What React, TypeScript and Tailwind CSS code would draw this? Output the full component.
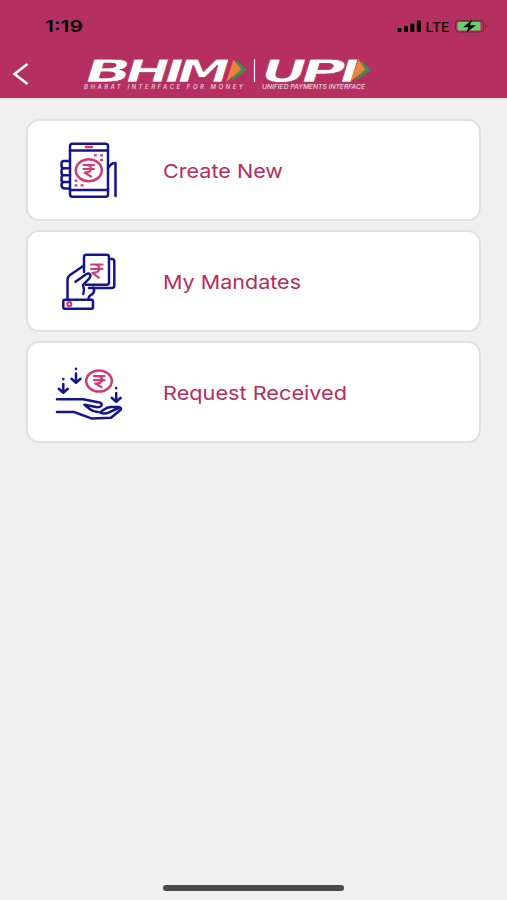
import type { ReactNode } from "react";

const NAVY = "#15158c";
const PINK = "#d23a78";

type IconProps = {
  label: string;
  viewBox: string;
  className: string;
  children: ReactNode;
};

function LineIcon({ label, viewBox, className, children }: IconProps) {
  return (
    <svg
      aria-label={label}
      viewBox={viewBox}
      className={className}
      fill="none"
      stroke={NAVY}
      strokeWidth={2.5}
      strokeLinecap="round"
      strokeLinejoin="round"
    >
      {children}
    </svg>
  );
}

function PhoneIcon() {
  return (
    <LineIcon label="Phone" viewBox="50 130 80 80" className="size-20">
      <rect x="70" y="143.7" width="38" height="53" rx="2.5" />
      <path d="M70 150.5H108M70 190H108" />
      <path d="M70 161H64Q61.5 161 61.5 163.5V166Q61.5 168 64 168.3H70M64 168.3Q61.5 168.3 61.5 171V173Q61.5 175.3 64 175.3H70M64 175.3Q61.5 175.3 61.5 178V180Q61.5 182 64 182H70M64 182Q61.5 182 61.5 185Q61.5 188.5 65 188.5H70" />
      <path d="M108 168L111 164.5Q112.5 163 115.5 163V196" />
      <g stroke={PINK}>
        <path d="M86 147H92" />
        <ellipse cx="88.8" cy="170.3" rx="13" ry="11" />
        <path
          d="M83.5 165H94M83.5 169H94M83.5 165H86.5Q91 165 91 169Q91 172.5 84.5 172.5L91 176.5"
          strokeWidth="2.1"
        />
        <path
          d="M95.2 155.3H95.7M101.3 155.3H101.8M101.3 160H101.8M75.8 180.7H76.3M75.8 185.3H76.3M81.8 185.3H82.3"
          strokeWidth="2.3"
          strokeLinecap="square"
        />
      </g>
    </LineIcon>
  );
}

function HandCardIcon() {
  return (
    <LineIcon label="Hand holding card" viewBox="50 240 80 80" className="size-20">
      <rect x="63.3" y="298.7" width="29.7" height="9" rx="1.5" />
      <path d="M67.5 298V279Q67.5 276 70 274L84 264.5" />
      <path d="M84 271V256Q84 253.8 86.5 253.8H106.5Q109 253.8 109 256V281.5Q109 283.7 106.5 283.7H86" />
      <path d="M109 258H112Q114.3 258 114.3 260.5V284.5Q114.3 287 111.8 287H89" />
      <path d="M75.5 280.8L86.5 273Q88.5 271.8 90 273.3Q91.2 275 89.3 277.3L83 284Q84.8 288.5 83.3 293" />
      <path d="M93.3 286.5Q95.5 291 91.5 293.7Q88.5 295 88.5 298" />
      <g stroke={PINK} strokeWidth="2.2">
        <path d="M91 263.5H102.5M91 268H102.5M91 263.5H94Q99.3 263.5 99.3 267.8Q99.3 271.8 92.5 271.8L98.8 276.7" />
        <circle cx="69.3" cy="303.2" r="2" />
      </g>
    </LineIcon>
  );
}

function ReceiveIcon() {
  return (
    <LineIcon label="Receive money" viewBox="45 350 90 80" className="h-20 w-[90px]">
      <path d="M63.3 377V377.2M63.3 382V390.5M58.8 386.8L63.3 390.8L67.8 386.8" />
      <path d="M76 366.8V367M76 371.5V380.5M71.5 376.8L76 380.8L80.5 376.8" />
      <path d="M116.2 386V386.2M116.2 391V399.3M111.7 395.8L116.2 399.8L120.7 395.8" />
      <path d="M57 397.2H83L99.5 400.4Q102.5 401.2 101.5 403.5Q100.3 405.6 96 405L84.5 402.7L90 407.2Q93 409.8 98 410" />
      <path d="M57 410H74L92 416.6L111 415.8L121 407.5Q121.5 405 118 405H111Q107 405.2 104 407.5L100 410.4Q104 412.4 108.5 410.6L118.5 406" />
      <g stroke={PINK}>
        <ellipse cx="99" cy="379" rx="12.8" ry="10.5" />
        <path
          d="M94 374.2H104.5M94 378.2H104.5M94 374.2H97Q102 374.2 102 378Q102 381.5 95.3 381.5L101.5 385"
          strokeWidth="2.2"
        />
      </g>
    </LineIcon>
  );
}

function Logo() {
  return (
    <svg
      aria-label="BHIM UPI"
      viewBox="80 54 296 40"
      className="h-10 w-[296px] overflow-visible"
      fill="white"
    >
      <g
        fontSize="31.5"
        fontWeight="700"
        fontFamily="'DejaVu Sans', sans-serif"
        stroke="#b53060"
        strokeWidth=".7"
      >
        <text transform="translate(81 82) skewX(-17) scale(1.7 1)">
          <tspan x="0" textLength="28" lengthAdjust="spacingAndGlyphs">B</tspan>
          <tspan x="24.2">H</tspan>
          <tspan x="47">I</tspan>
          <tspan x="54.5">M</tspan>
        </text>
        <text transform="translate(257.5 82) skewX(-17) scale(1.7 1)">
          <tspan x="0" textLength="27.5" lengthAdjust="spacingAndGlyphs">U</tspan>
          <tspan x="23.3" textLength="27" lengthAdjust="spacingAndGlyphs">P</tspan>
          <tspan x="46.3">I</tspan>
        </text>
      </g>
      <path d="M254.5 59V82" stroke="white" strokeWidth="1.2" />
      <path d="M236.5 60L247 70L231 81.5Z" fill="#3f8a4d" />
      <path d="M233.5 59.5L241.5 69.5L226 82Z" fill="#ee8140" />
      <path d="M361.5 60L370.8 70L354.5 81.5Z" fill="#3f8a4d" />
      <path d="M358.5 59.5L365.5 69.5L350 82Z" fill="#ee8140" />
      <g fontFamily="Inter, sans-serif" fontWeight="500" fontStyle="italic" fillOpacity=".8">
        <text x="84" y="89" textLength="159" fontSize="6">
          BHARAT INTERFACE FOR MONEY
        </text>
        <text x="262" y="89" textLength="103" lengthAdjust="spacingAndGlyphs" fontSize="6.4">
          UNIFIED PAYMENTS INTERFACE
        </text>
      </g>
    </svg>
  );
}

function StatusIcons() {
  return (
    <svg viewBox="395 16 96 20" className="h-5 w-24" fontFamily="Inter, sans-serif">
      <rect x="397.5" y="28" width="4" height="4" rx="1" />
      <rect x="404" y="26" width="4" height="6" rx="1" />
      <rect x="410.3" y="23.5" width="4" height="8.5" rx="1" />
      <rect x="416.8" y="20.5" width="4" height="11.5" rx="1" />
      <text x="425.5" y="31.5" fontSize="13" fontWeight="500" textLength="24" lengthAdjust="spacingAndGlyphs">
        LTE
      </text>
      <rect x="455.5" y="20.5" width="28" height="11.5" rx="3" fill="none" stroke="#6b2543" />
      <rect x="457.5" y="22" width="23" height="8.5" rx="1.5" fill="#68cf69" />
      <path d="M485.5 24V28.5L487.5 26.3Z" fill="#6b2543" />
      <path d="M472 20L463 27.2H468.5L466.5 32.5L476 25.3H470Z" />
    </svg>
  );
}

const items = [
  { label: "Create New", icon: <PhoneIcon />, width: "w-[120px]", length: 120 },
  { label: "My Mandates", icon: <HandCardIcon />, width: "w-[138px]", length: 138 },
  { label: "Request Received", icon: <ReceiveIcon />, width: "w-[184px]", length: 184 },
];

export default function App() {
  return (
    <div className="flex h-[900px] w-[507px] flex-col bg-[#f0f0f0] font-['Inter',sans-serif]">
      <header className="h-[98px] bg-[#b53060]">
        <div className="flex h-[54px] items-start justify-between pt-4 pr-4 pl-[45px]">
          <svg viewBox="0 0 40 20" className="h-5 w-10" aria-label="Time">
            <text
              x="0"
              y="16"
              fontSize="16.5"
              fontWeight="600"
              textLength="38"
              lengthAdjust="spacingAndGlyphs"
            >
              1:19
            </text>
          </svg>
          <StatusIcons />
        </div>
        <div className="flex items-center">
          <button aria-label="Back" className="flex w-20 pl-3">
            <svg viewBox="0 0 18 24" className="h-6 w-[18px]" fill="none" stroke="white" strokeWidth="2.5">
              <path d="M15.5 2L2.5 12L15.5 22" />
            </svg>
          </button>
          <Logo />
        </div>
      </header>

      <main className="flex flex-1 flex-col gap-[9px] px-[26px] pt-[21px]">
        {items.map((item) => (
          <button
            key={item.label}
            className="flex h-[102px] items-center rounded-[13px] border-2 border-[#e1e1e1] bg-white"
          >
            <span className="flex w-[135px] justify-center pr-[11px]">{item.icon}</span>
            <svg viewBox={`0 0 ${item.length} 28`} className={`h-7 overflow-visible ${item.width}`}>
              <text
                x="0"
                y="21.5"
                fontSize="19"
                fill="#b52d5d"
                textLength={item.length}
                lengthAdjust="spacingAndGlyphs"
              >
                {item.label}
              </text>
            </svg>
          </button>
        ))}
      </main>

      <footer className="flex justify-center pb-[9px]">
        <div className="h-1.5 w-[181px] rounded-full bg-[#4a4a4a]" />
      </footer>
    </div>
  );
}
